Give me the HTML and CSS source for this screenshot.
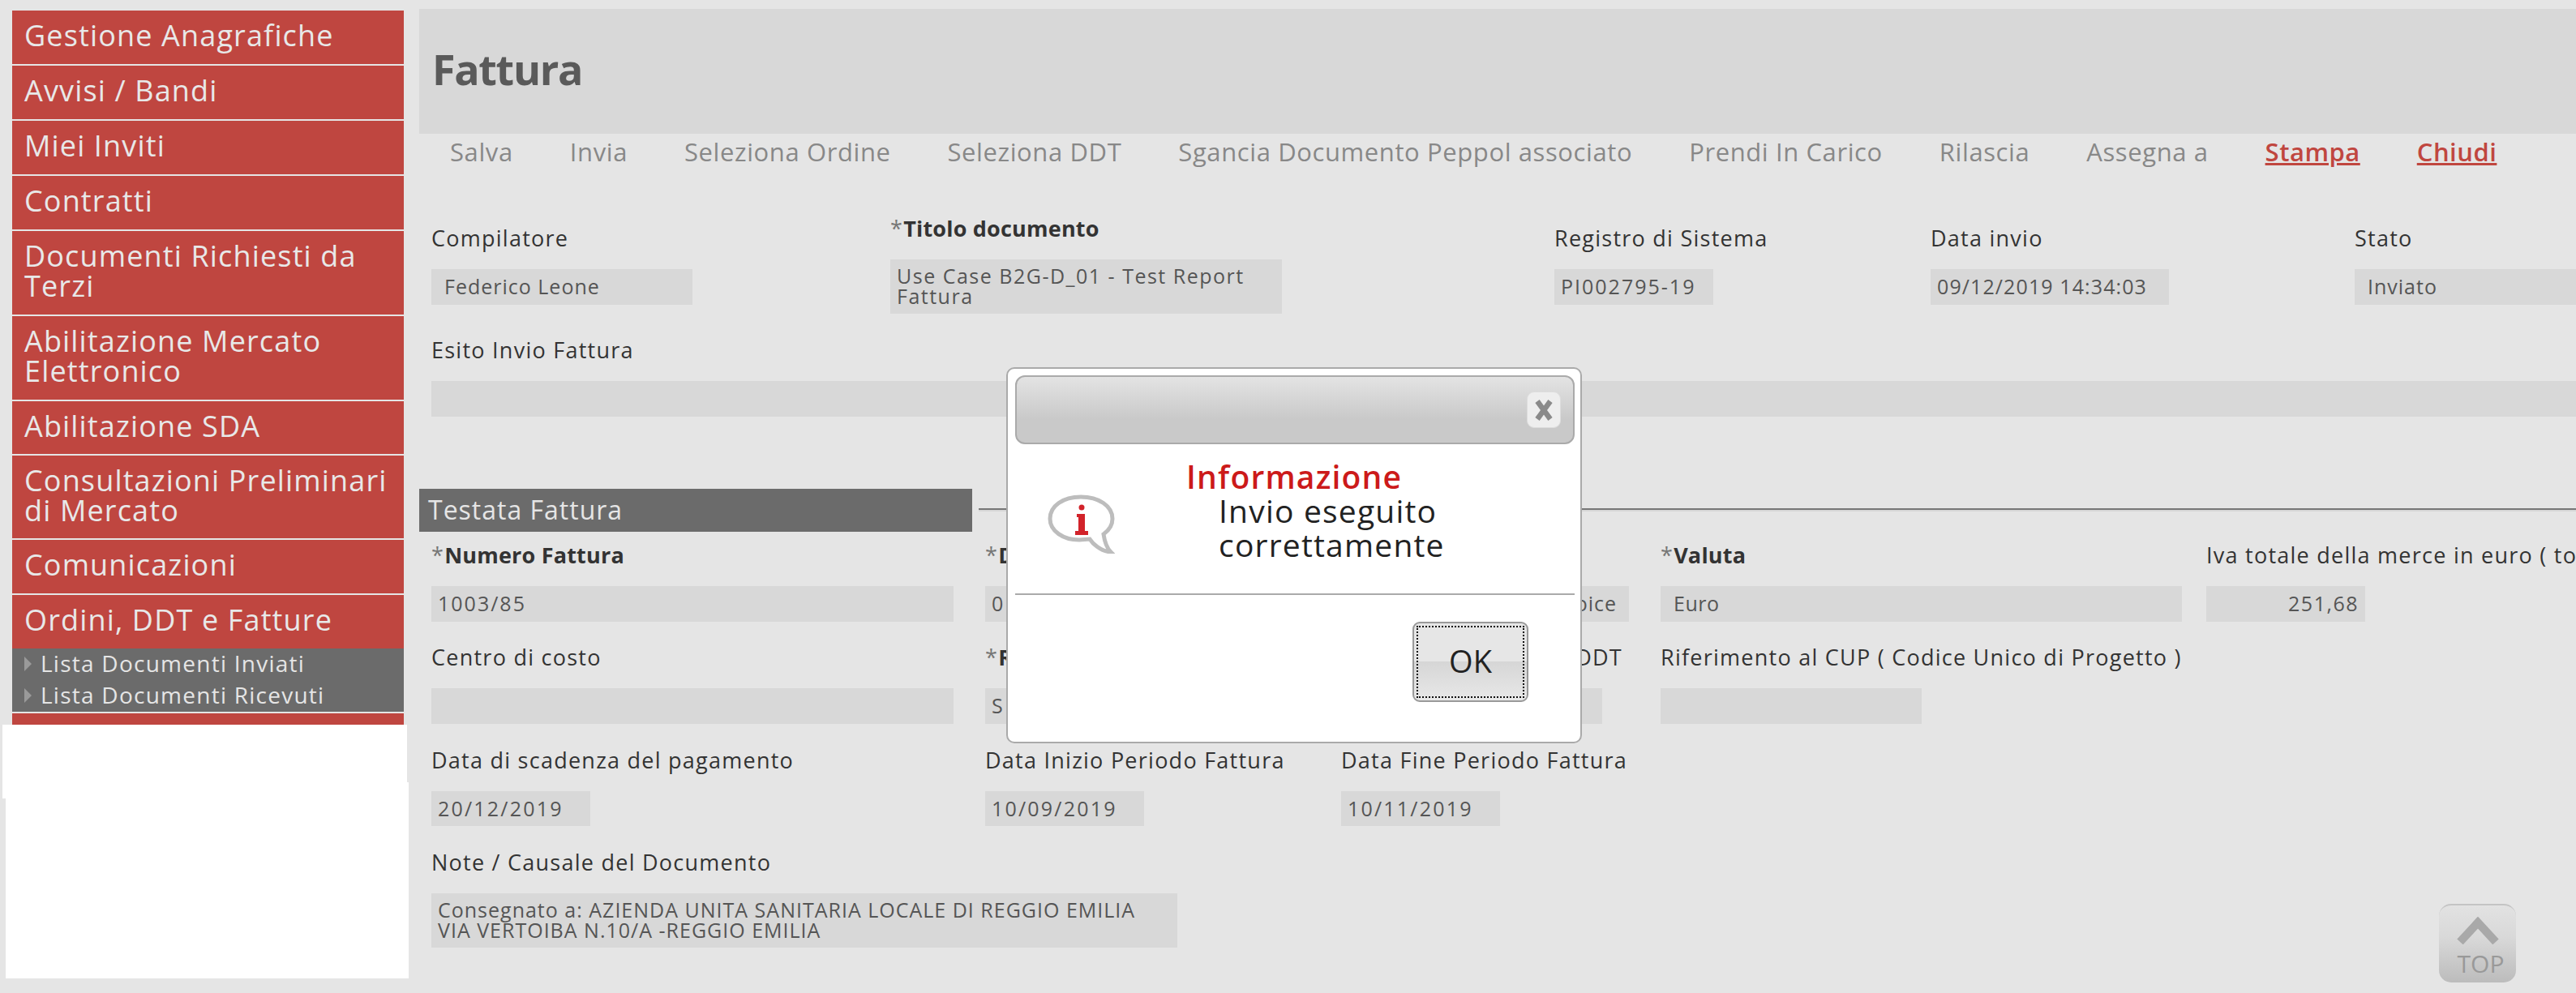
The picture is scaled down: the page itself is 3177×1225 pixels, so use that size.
FILE: index.html
```html
<!DOCTYPE html>
<html lang="it">
  <head>
    <meta charset="UTF-8" />
    <meta name="viewport" content="width=device-width, initial-scale=1" />
    <title>Fattura</title>
    <link rel="stylesheet" href="styles.css">
  </head>
  <body>
    <aside class="menu">
      <a class="menu-item">Gestione Anagrafiche</a>
      <a class="menu-item">Avvisi / Bandi</a>
      <a class="menu-item">Miei Inviti</a>
      <a class="menu-item">Contratti</a>
      <a class="menu-item">Documenti Richiesti da Terzi</a>
      <a class="menu-item">Abilitazione Mercato Elettronico</a>
      <a class="menu-item menu-item--sda">Abilitazione SDA</a>
      <a class="menu-item menu-item--tight">Consultazioni Preliminari di Mercato</a>
      <a class="menu-item">Comunicazioni</a>
      <div class="menu-group">
        <a class="menu-item">Ordini, DDT e Fatture</a>
        <ul class="submenu">
          <li>Lista Documenti Inviati</li>
          <li>Lista Documenti Ricevuti</li>
        </ul>
      </div>
      <a class="menu-item menu-item--last"></a>
    </aside>
    <div class="blot blot--upper"></div>
    <div class="blot blot--lower"></div>

    <main class="content">
      <h1 class="page-title">Fattura</h1>
      <nav class="toolbar">
        <a>Salva</a>
        <a>Invia</a>
        <a>Seleziona Ordine</a>
        <a>Seleziona DDT</a>
        <a>Sgancia Documento Peppol associato</a>
        <a>Prendi In Carico</a>
        <a>Rilascia</a>
        <a>Assegna a</a>
        <a class="toolbar-link">Stampa</a>
        <a class="toolbar-link">Chiudi</a>
      </nav>

      <section class="doc-row">
        <div class="field">
          <label>Compilatore</label>
          <div class="box box--inset w-322">Federico Leone</div>
        </div>
        <div class="field">
          <label><i>*</i><b>Titolo documento</b></label>
          <div class="box box--multi box--title w-483">Use Case B2G-D_01 - Test Report Fattura</div>
        </div>
        <div class="field">
          <label>Registro di Sistema</label>
          <div class="box box--digits w-196">PI002795-19</div>
        </div>
        <div class="field">
          <label>Data invio</label>
          <div class="box box--stamp w-294">09/12/2019 14:34:03</div>
        </div>
        <div class="field">
          <label>Stato</label>
          <div class="box box--inset">Inviato</div>
        </div>
      </section>

      <section class="esito">
        <label>Esito Invio Fattura</label>
        <div class="box"></div>
      </section>

      <div class="section-head">
        <h2>Testata Fattura</h2>
        <div class="section-line"></div>
      </div>

      <section class="form-grid">
        <div class="field">
          <label><i>*</i><b>Numero Fattura</b></label>
          <div class="box box--digits w-644">1003/85</div>
        </div>
        <div class="field">
          <label><i>*</i><b>D</b></label>
          <div class="box w-400">0</div>
        </div>
        <div class="field">
          <label></label>
          <div class="box box--end w-355">oice</div>
        </div>
        <div class="field">
          <label><i>*</i><b>Valuta</b></label>
          <div class="box box--inset box--euro w-643">Euro</div>
        </div>
        <div class="field">
          <label class="label--clip">Iva totale della merce in euro ( to</label>
          <div class="box box--num w-196">251,68</div>
        </div>

        <div class="field">
          <label>Centro di costo</label>
          <div class="box w-644"></div>
        </div>
        <div class="field">
          <label><i>*</i><b>R</b></label>
          <div class="box w-400">S</div>
        </div>
        <div class="field">
          <label class="label--end">DDT</label>
          <div class="box w-322"></div>
        </div>
        <div class="field field--wide">
          <label>Riferimento al CUP ( Codice Unico di Progetto )</label>
          <div class="box w-322"></div>
        </div>

        <div class="field field--dates">
          <label>Data di scadenza del pagamento</label>
          <div class="box box--date">20/12/2019</div>
        </div>
        <div class="field field--dates">
          <label>Data Inizio Periodo Fattura</label>
          <div class="box box--date">10/09/2019</div>
        </div>
        <div class="field field--dates field--wide-date">
          <label>Data Fine Periodo Fattura</label>
          <div class="box box--date">10/11/2019</div>
        </div>

        <div class="field field--note">
          <label>Note / Causale del Documento</label>
          <div class="box box--multi w-920">Consegnato a: AZIENDA UNITA SANITARIA LOCALE DI REGGIO EMILIA<br>VIA VERTOIBA N.10/A -REGGIO EMILIA</div>
        </div>
      </section>
    </main>

    <div class="dialog">
      <div class="dialog-bar">
        <button class="dialog-close">
          <svg viewBox="0 0 22 32" width="22" height="32"><path d="M3 5 L19 27 M19 5 L3 27" stroke="#8a8a8a" stroke-width="6.5" fill="none"/></svg>
        </button>
      </div>
      <div class="dialog-body">
        <svg class="dialog-icon" viewBox="0 0 83 73" width="83" height="73">
          <path d="M41 3 C19 3 3 14 3 30 C3 45 19 56 39 56 L52 55 C55 60 65 70 78 71 C72 65 70 56 69 49 C76 44 80 38 80 30 C80 14 63 3 41 3 Z" fill="#fff" stroke="#bdbdbd" stroke-width="5"/>
          <circle cx="42" cy="16" r="3.5" fill="#d2232a"/>
          <path d="M36 24 H46 V45 H50 V50 H34 V45 H38 V28 H36 Z" fill="#d2232a"/>
        </svg>
        <div class="dialog-text">
          <h3>Informazione</h3>
          <p>Invio eseguito<br>correttamente</p>
        </div>
      </div>
      <div class="dialog-foot">
        <button class="dialog-ok"><span>OK</span></button>
      </div>
    </div>

    <a class="to-top">
      <svg viewBox="0 0 52 34" width="52" height="34"><path d="M4 31 L26 7 L48 31" fill="none" stroke="#a9a9a9" stroke-width="10"/></svg>
      <span>TOP</span>
    </a>
  </body>
</html>
```

FILE: styles.css
```css
html,
body {
  margin: 0;
  height: 1225px;
  overflow: hidden;
}
body {
  display: flex;
  position: relative;
  background: #e5e5e5;
  font-family: "Open Sans", sans-serif;
  color: #333;
}

/* left menu */
.menu {
  display: flex;
  flex-direction: column;
  gap: 2px;
  flex: none;
  width: 483px;
  margin: 13px 0 0 15px;
}
.menu-item {
  display: block;
  box-sizing: border-box;
  padding: 12px 10px 17px 15px;
  background: #bf4640;
  color: #e8e8e8;
  font-size: 36px;
  line-height: 37px;
  letter-spacing: 1.15px;
}
.menu-item--sda {
  padding-bottom: 16px;
}
.menu-item--tight {
  padding-bottom: 16px;
}
.menu-item--last {
  height: 14px;
  padding: 0;
}
.submenu {
  margin: 0;
  padding: 0;
  list-style: none;
  background: #6b6b6b;
  height: 78px;
}
.submenu li {
  position: relative;
  padding-left: 35px;
  height: 39px;
  color: #e5e5e5;
  font-size: 28px;
  line-height: 37px;
  letter-spacing: 1.25px;
}
.submenu li::before {
  content: "";
  position: absolute;
  left: 15px;
  top: 10px;
  border-left: 9px solid #9a9a9a;
  border-top: 9px solid transparent;
  border-bottom: 9px solid transparent;
}

/* white patches over the menu */
.blot {
  position: absolute;
  background: #fff;
}
.blot--upper {
  left: 3px;
  top: 894px;
  width: 499px;
  height: 91px;
}
.blot--lower {
  left: 7px;
  top: 965px;
  width: 497px;
  height: 242px;
}

/* main column */
.content {
  flex: 1;
  min-width: 0;
  margin: 11px 0 0 19px;
}
.page-title {
  display: flex;
  align-items: center;
  box-sizing: border-box;
  height: 154px;
  margin: 0;
  padding: 0 0 7px 16px;
  background: #d8d8d8;
  color: #5a5a5a;
  font-size: 52px;
  font-weight: 700;
  letter-spacing: -1.3px;
}
.toolbar {
  display: flex;
  gap: 70px;
  height: 46px;
  padding-left: 38px;
  color: #888;
  font-size: 31px;
  line-height: 45px;
  letter-spacing: 0.6px;
  white-space: nowrap;
}
.toolbar-link {
  color: #c0463f;
  font-weight: 600;
  letter-spacing: 0.5px;
  text-decoration: underline;
  text-decoration-thickness: 3px;
}

/* fields */
label {
  display: block;
  height: 36px;
  margin-bottom: 20px;
  color: #333;
  font-size: 27px;
  line-height: 36px;
  letter-spacing: 1.25px;
  white-space: nowrap;
}
label i {
  color: #777;
  font-style: normal;
}
label b {
  font-weight: 700;
  letter-spacing: 0.2px;
}
.label--clip {
  overflow: hidden;
}
.label--end {
  width: 347px;
  text-align: right;
}
.box {
  box-sizing: border-box;
  height: 44px;
  padding: 0 8px;
  background: #d8d8d8;
  color: #555;
  font-size: 25px;
  line-height: 42px;
  letter-spacing: 1px;
  overflow: hidden;
  white-space: nowrap;
}
.box--inset {
  padding-left: 16px;
}
.box--multi {
  height: 67px;
  padding-top: 8px;
  line-height: 25px;
  white-space: normal;
}
.box--title {
  letter-spacing: 1.5px;
}
.box--digits {
  letter-spacing: 2px;
}
.box--stamp {
  letter-spacing: 1.1px;
}
.box--euro {
  letter-spacing: 0.5px;
}
.box--num {
  text-align: right;
  letter-spacing: 1.5px;
}
.box--end {
  text-align: right;
  padding-right: 15px;
}
.box--date {
  width: 196px;
  height: 43px;
  letter-spacing: 2.2px;
}
.w-196 { width: 196px; }
.w-294 { width: 294px; }
.w-322 { width: 322px; }
.w-355 { width: 355px; }
.w-400 { width: 400px; }
.w-483 { width: 483px; }
.w-643 { width: 643px; }
.w-644 { width: 644px; }
.w-920 { width: 920px; }

.doc-row {
  display: grid;
  grid-template-columns: 566px 819px 464px 523px 1fr;
  align-items: center;
  margin-top: 53px;
  padding-left: 15px;
}
.esito {
  margin-top: 27px;
  padding-left: 15px;
}
.section-head {
  display: flex;
  margin-top: 89px;
}
.section-head h2 {
  flex: none;
  box-sizing: border-box;
  width: 682px;
  height: 53px;
  margin: 0;
  padding-left: 11px;
  background: #6b6b6b;
  color: #e5e5e5;
  font-size: 32px;
  font-weight: 400;
  line-height: 51px;
  letter-spacing: 1px;
}
.section-line {
  flex: 1;
  height: 2px;
  margin: 24px 0 0 8px;
  background: #777;
  box-shadow: 0 2px 0 #d6d6d6;
}
.form-grid {
  display: grid;
  grid-template-columns: 683px 439px 394px 673px 1fr;
  row-gap: 26px;
  margin-top: 11px;
  padding-left: 15px;
}
.field--wide {
  grid-column: span 2;
}
.field--dates {
  margin-top: 1px;
}
.field--wide-date {
  grid-column: span 3;
}
.field--note {
  grid-column: 1 / -1;
  margin-top: 1px;
}

/* dialog */
.dialog {
  position: absolute;
  left: 1241px;
  top: 453px;
  box-sizing: border-box;
  width: 710px;
  height: 464px;
  padding: 8px 7px 0 9px;
  background: #fff;
  border: 2px solid #aaa;
  border-radius: 10px;
}
.dialog-bar {
  display: flex;
  justify-content: flex-end;
  align-items: center;
  box-sizing: border-box;
  height: 85px;
  padding: 0 15px 0 0;
  background: linear-gradient(#e3e3e3, #c9c9c9 65%);
  border: 2px solid #aaa;
  border-radius: 12px;
}
.dialog-close {
  display: flex;
  align-items: center;
  justify-content: center;
  width: 42px;
  height: 45px;
  padding: 0;
  background: #eee;
  border: 1px solid #ddd;
  border-radius: 9px;
}
.dialog-body {
  display: flex;
  box-sizing: border-box;
  height: 186px;
  border-bottom: 2px solid #aaa;
}
.dialog-icon {
  flex: none;
  margin: 62px 0 0 40px;
}
.dialog-text {
  margin-left: 88px;
  padding-top: 19px;
}
.dialog-text h3 {
  margin: 0;
  color: #cc1a1a;
  font-size: 39px;
  font-weight: 600;
  line-height: 42px;
  letter-spacing: 1.2px;
}
.dialog-text p {
  margin: 0 0 0 40px;
  color: #222;
  font-size: 39px;
  line-height: 42px;
  letter-spacing: 1.2px;
}
.dialog-foot {
  display: flex;
  justify-content: flex-end;
  padding: 33px 57px 0 0;
}
.dialog-ok {
  box-sizing: border-box;
  width: 143px;
  height: 99px;
  padding: 3px;
  background: linear-gradient(#e6e6e6 50%, #d6d6d6 50%, #e8e8e8);
  border: 2px solid #999;
  border-radius: 9px;
  font-family: inherit;
}
.dialog-ok span {
  display: block;
  height: 100%;
  border: 2px dotted #111;
  box-sizing: border-box;
  color: #222;
  font-size: 38px;
  line-height: 82px;
}

/* back to top */
.to-top {
  position: absolute;
  left: 3008px;
  top: 1115px;
  display: flex;
  flex-direction: column;
  align-items: center;
  box-sizing: border-box;
  width: 95px;
  height: 97px;
  padding-top: 14px;
  background: linear-gradient(#e2e2e2, #d9d9d9 40%, #bcbcbc);
  border-top: 2px solid #c4c4c4;
  border-radius: 15px;
  color: #999;
  font-size: 30px;
  line-height: 30px;
}
.to-top svg {
  display: block;
  margin-bottom: 9px;
}
.to-top span {
  margin-left: 8px;
}
```
